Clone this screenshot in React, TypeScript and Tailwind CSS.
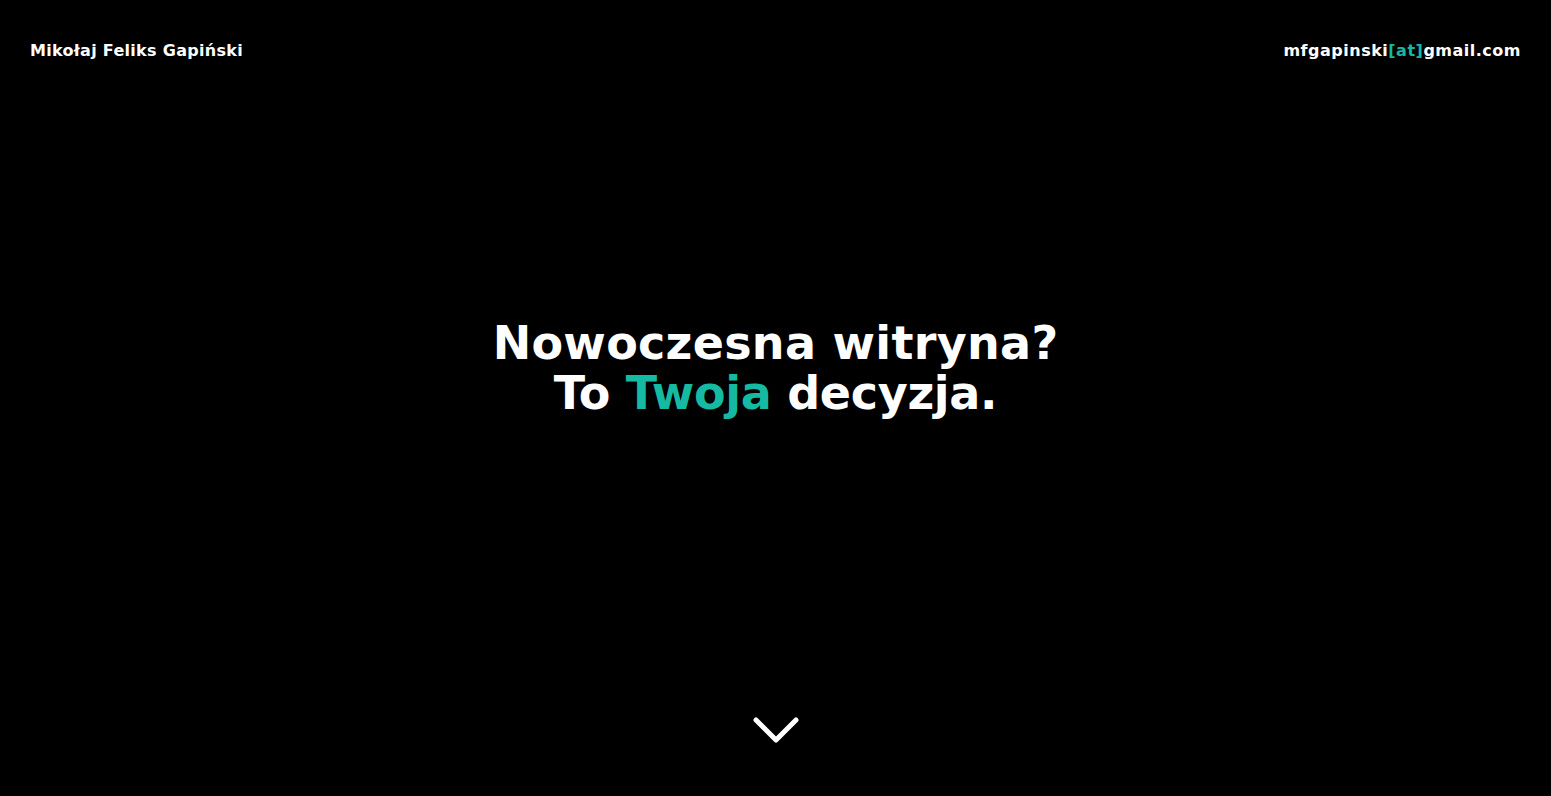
export default function App() {
  return (
    <div className="h-[796px] w-full bg-black text-white flex flex-col" style={{ fontFamily: '"DejaVu Sans", sans-serif' }}>
      <header className="flex justify-between items-center px-[30px] pt-[39px] h-[62px] text-[16px] font-bold">
        <span className="tracking-[0.3px]">Mikołaj Feliks Gapiński</span>
        <span className="tracking-[0.5px]">
          mfgapinski<span className="text-[#16b9a2]">[at]</span>gmail.com
        </span>
      </header>
      <main className="flex-1 flex items-center justify-center pb-[43px]">
        <h1 className="text-center font-bold text-[46px] leading-[50px] tracking-[0.3px]">
          Nowoczesna witryna?
          <br />
          <span className="tracking-[-0.3px]">
            To <span className="text-[#16b9a2]">Twoja</span> decyzja.
          </span>
        </h1>
      </main>
      <div className="flex justify-center pb-[50px]">
        <svg width="48" height="30" viewBox="0 0 48 30" fill="none">
          <path d="M4 4 L24 24 L44 4" stroke="white" strokeWidth="5" strokeLinecap="round" strokeLinejoin="round" />
        </svg>
      </div>
    </div>
  );
}
